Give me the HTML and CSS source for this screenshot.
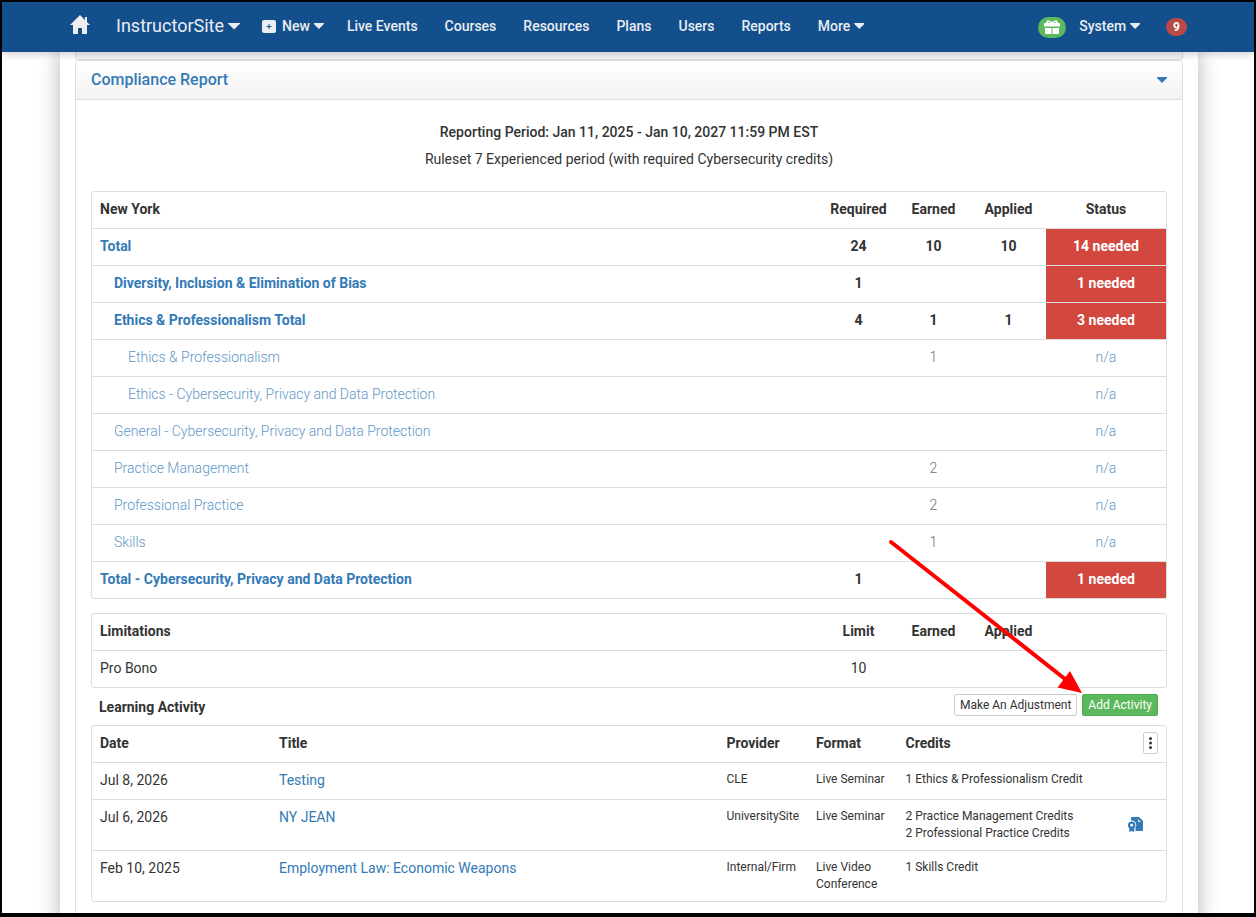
FILE: index.html
```
<!DOCTYPE html>
<html lang="en">
<head>
    <meta charset="UTF-8">
    <title>Compliance Report</title>
    <link rel="stylesheet" href="styles.css">
</head>
<body>
    <header class="navbar">
        <nav class="nav-inner">
            <a class="home" href="#" aria-label="Home">
                <svg width="20" height="19" viewBox="0 0 20 19" fill="currentColor"><path d="M10 0 0 10h3v9h5v-6h4v6h5v-9h3l-3-3V2h-2v3z"/></svg>
            </a>
            <button class="nav-item brand">InstructorSite <span class="caret"></span></button>
            <button class="nav-item new">
                <svg width="14" height="13" viewBox="0 0 14 13"><rect width="14" height="13" rx="2" fill="currentColor"/><path d="M7 4v5M4.500 6.500h5" stroke="#134f8c" stroke-width="1"/></svg>
                New <span class="caret"></span>
            </button>
            <a class="nav-item" href="#">Live Events</a>
            <a class="nav-item" href="#">Courses</a>
            <a class="nav-item" href="#">Resources</a>
            <a class="nav-item" href="#">Plans</a>
            <a class="nav-item" href="#">Users</a>
            <a class="nav-item" href="#">Reports</a>
            <button class="nav-item">More <span class="caret"></span></button>
            <div class="nav-right">
                <a class="gift" href="#" aria-label="Gifts">
                    <svg width="16" height="14" viewBox="0 0 16 14"><path d="M1 3h14q1 0 1 1v2.500H0V4q0-1 1-1zM1 8h6.500v6H2q-1 0-1-1zM8.500 8H15v5q0 1-1 1H8.500z" fill="#fff"/><path d="M8 3.500C6 3.500 3 3.500 3 2.200S6 .2 8 3.500C10 .2 13 .9 13 2.200S10 3.500 8 3.500z" fill="none" stroke="#fff" stroke-width="1.500"/></svg>
                </a>
                <button class="nav-item">System <span class="caret"></span></button>
                <a class="badge" href="#">9</a>
            </div>
        </nav>
    </header>

    <main class="container">
        <div class="panel panel-prev"></div>
        <section class="panel">
            <div class="panel-heading">
                <h2>Compliance Report</h2>
                <button class="toggle" aria-label="Collapse"><span class="caret"></span></button>
            </div>
            <div class="panel-body">
                <div class="period">
                    <p><b>Reporting Period: Jan 11, 2025 - Jan 10, 2027 11:59 PM EST</b></p>
                    <p>Ruleset 7 Experienced period (with required Cybersecurity credits)</p>
                </div>

                <div class="box">
                    <table class="credits">
                        <thead>
                            <tr><th>New York</th><th class="num">Required</th><th class="num">Earned</th><th class="num">Applied</th><th class="status">Status</th></tr>
                        </thead>
                        <tbody>
                            <tr class="strong"><td><a href="#">Total</a></td><td>24</td><td>10</td><td>10</td><td class="needed">14 needed</td></tr>
                            <tr class="strong"><td class="in1"><a href="#">Diversity, Inclusion &amp; Elimination of Bias</a></td><td>1</td><td></td><td></td><td class="needed">1 needed</td></tr>
                            <tr class="strong"><td class="in1"><a href="#">Ethics &amp; Professionalism Total</a></td><td>4</td><td>1</td><td>1</td><td class="needed">3 needed</td></tr>
                            <tr class="light"><td class="in2"><a href="#">Ethics &amp; Professionalism</a></td><td></td><td>1</td><td></td><td><a href="#">n/a</a></td></tr>
                            <tr class="light"><td class="in2"><a href="#">Ethics - Cybersecurity, Privacy and Data Protection</a></td><td></td><td></td><td></td><td><a href="#">n/a</a></td></tr>
                            <tr class="light"><td class="in1"><a href="#">General - Cybersecurity, Privacy and Data Protection</a></td><td></td><td></td><td></td><td><a href="#">n/a</a></td></tr>
                            <tr class="light"><td class="in1"><a href="#">Practice Management</a></td><td></td><td>2</td><td></td><td><a href="#">n/a</a></td></tr>
                            <tr class="light"><td class="in1"><a href="#">Professional Practice</a></td><td></td><td>2</td><td></td><td><a href="#">n/a</a></td></tr>
                            <tr class="light"><td class="in1"><a href="#">Skills</a></td><td></td><td>1</td><td></td><td><a href="#">n/a</a></td></tr>
                            <tr class="strong"><td><a href="#">Total - Cybersecurity, Privacy and Data Protection</a></td><td>1</td><td></td><td></td><td class="needed">1 needed</td></tr>
                        </tbody>
                    </table>
                </div>

                <div class="box limits">
                    <table class="credits">
                        <thead>
                            <tr><th>Limitations</th><th class="num">Limit</th><th class="num">Earned</th><th class="num">Applied</th><th class="status"></th></tr>
                        </thead>
                        <tbody>
                            <tr><td>Pro Bono</td><td>10</td><td></td><td></td><td></td></tr>
                        </tbody>
                    </table>
                </div>

                <div class="activity-bar">
                    <h3>Learning Activity</h3>
                    <button class="btn">Make An Adjustment</button>
                    <button class="btn btn-success">Add Activity</button>
                    <svg class="arrow" width="196" height="156" viewBox="0 0 196 156"><path d="M4 4 178 141" stroke="#f00" stroke-width="4" stroke-linecap="round"/><path d="M195 155 170.500 149.500 183 133z" fill="#f00"/></svg>
                </div>

                <div class="box">
                    <table class="activity">
                        <thead>
                            <tr>
                                <th class="w2">Date</th><th class="w5">Title</th><th class="w1">Provider</th><th class="w1">Format</th><th class="w2">Credits</th>
                                <th class="w1 actions">
                                    <button class="more" aria-label="Options"><svg width="3" height="12" viewBox="0 0 3 12" fill="#333"><circle cx="1.500" cy="1.500" r="1.500"/><circle cx="1.500" cy="6" r="1.500"/><circle cx="1.500" cy="10.500" r="1.500"/></svg></button>
                                </th>
                            </tr>
                        </thead>
                        <tbody>
                            <tr><td>Jul 8, 2026</td><td><a href="#">Testing</a></td><td class="small">CLE</td><td class="small">Live Seminar</td><td class="small" colspan="2">1 Ethics &amp; Professionalism Credit</td></tr>
                            <tr>
                                <td>Jul 6, 2026</td><td><a href="#">NY JEAN</a></td><td class="small">UniversitySite</td><td class="small">Live Seminar</td><td class="small">2 Practice Management Credits<br>2 Professional Practice Credits</td>
                                <td class="cert">
                                    <a href="#" aria-label="Certificate"><svg width="15" height="15" viewBox="0 0 15 15"><path d="M4 0h7l4 4v9q0 1-1 1H7.500v-3.500A4.500 4.500 0 0 0 3 3.500V1q0-1 1-1z" fill="#337ab7"/><path d="M10.500 2.500v2h2" fill="none" stroke="#fff"/><circle cx="3.700" cy="8.200" r="3.700" fill="#337ab7"/><path d="M1.300 10h4.900v5l-2.500-1-2.400 1z" fill="#337ab7"/><circle cx="3.700" cy="8.200" r="1.400" fill="#fff"/></svg></a>
                                </td>
                            </tr>
                            <tr><td>Feb 10, 2025</td><td><a href="#">Employment Law: Economic Weapons</a></td><td class="small">Internal/Firm</td><td class="small">Live Video Conference</td><td class="small" colspan="2">1 Skills Credit</td></tr>
                        </tbody>
                    </table>
                </div>
            </div>
        </section>
    </main>
</body>
</html>
```
FILE: styles.css
```
* {
    box-sizing: border-box;
}
body {
    display: flex;
    flex-direction: column;
    height: 100vh;
    margin: 0;
    overflow: hidden;
    border: 2px solid #000;
    border-bottom-width: 4px;
    background: #fff;
    color: #333;
    font-family: Roboto, sans-serif;
    font-size: 14px;
    line-height: 20px;
}
h2, h3, p {
    margin: 0;
}
a {
    color: #337ab7;
    text-decoration: none;
}
button {
    font: inherit;
    cursor: pointer;
}
svg {
    display: block;
    flex: none;
}
.caret {
    width: 10px;
    height: 6px;
    background: currentColor;
    clip-path: polygon(0 0, 100% 0, 100% 15%, 50% 100%, 0 15%);
}

/* top bar */
.navbar {
    position: relative;
    z-index: 1;
    flex: none;
    height: 50px;
    background: #134f8c;
    box-shadow: 0 2px 8px rgba(0, 0, 0, 0.2);
}
.nav-inner {
    display: flex;
    align-items: center;
    gap: 27px;
    height: 48px;
    padding: 0 67px 0 68px;
}
.nav-item {
    display: flex;
    align-items: center;
    gap: 4px;
    padding: 0;
    border: 0;
    background: none;
    color: #e9edf2;
    font-weight: 500;
    white-space: nowrap;
}
.home {
    margin: -3px -1px 0 0;
    color: #eee;
}
.brand {
    margin-right: -5px;
    font-size: 18px;
    font-weight: 400;
}
.brand .caret {
    width: 12px;
    height: 7px;
}
.new {
    margin-right: -4px;
}
.new svg {
    margin-right: 2px;
}
.nav-right {
    display: flex;
    align-items: center;
    margin-left: auto;
}
.gift {
    display: flex;
    align-items: center;
    justify-content: center;
    width: 28px;
    height: 21px;
    margin: 2px 13px 0 0;
    border-radius: 11px;
    background: #5cb85c;
}
.badge {
    margin: 2px 0 0 26px;
    padding: 0 7px;
    border-radius: 10px;
    background: #b94a48;
    color: #fff;
    font-size: 12px;
    font-weight: 700;
    line-height: 18px;
}

/* page */
.container {
    flex: 1 0 auto;
    margin: 0 56px 0 58px;
    padding: 0 15px;
    background: #fff;
    box-shadow: 0 0 20px rgba(0, 0, 0, 0.3);
}
.panel {
    min-height: 860px;
    border: 1px solid #ddd;
    border-radius: 4px;
}
.panel-prev {
    min-height: 8px;
    border-top: 0;
    border-radius: 0 0 4px 4px;
    background: #f5f5f5;
}
.panel-heading {
    display: flex;
    align-items: center;
    justify-content: space-between;
    height: 39px;
    padding: 0 15px;
    border-bottom: 1px solid #ddd;
    border-radius: 3px 3px 0 0;
    background: linear-gradient(#fff, #f3f3f3);
    color: #337ab7;
}
.panel-heading h2 {
    font-size: 16px;
    font-weight: 500;
}
.toggle {
    padding: 0;
    border: 0;
    background: none;
    color: #337ab7;
}
.toggle .caret {
    display: block;
}
.panel-body {
    padding: 22px 15px;
}
.period {
    display: flex;
    flex-direction: column;
    gap: 7px;
    margin-bottom: 22px;
    text-align: center;
}
b {
    font-weight: 500;
}
th, h3 {
    font-weight: 700;
}
.box {
    border: 1px solid #ddd;
    border-radius: 3px;
}
.limits {
    margin-top: 14px;
}

table {
    width: 100%;
    border-collapse: separate;
    border-spacing: 0;
    table-layout: fixed;
}
th, td {
    padding: 7px 8px 9px;
    text-align: left;
    vertical-align: top;
}
td {
    border-top: 1px solid #ddd;
}
.credits th + th, .credits td + td {
    text-align: center;
}
.num {
    width: 75px;
}
.status {
    width: 120px;
}
.strong {
    font-weight: 700;
}
.light {
    color: #707070;
    font-weight: 300;
}
.light a {
    color: #5f97c8;
}
.credits .in1 {
    padding-left: 22px;
}
.credits .in2 {
    padding-left: 36px;
}
.needed {
    background: #d2483f;
    background-clip: padding-box;
    color: #fff;
}

/* learning activity */
.activity-bar {
    display: flex;
    position: relative;
    align-items: center;
    gap: 5px;
    height: 37px;
    padding: 0 9px 0 8px;
}
.activity-bar h3 {
    margin-right: auto;
    font-size: 14px;
}
.btn {
    height: 22px;
    margin-bottom: 3px;
    padding: 0 5px;
    border: 1px solid #ccc;
    border-radius: 2px;
    background: #fff;
    color: #333;
    font-size: 12px;
    line-height: 18px;
}
.btn-success {
    border-color: #4cae4c;
    background: #5cb85c;
    color: #fff;
}
.arrow {
    position: absolute;
    right: 84px;
    bottom: 31px;
    pointer-events: none;
}
.w1 {
    width: 8.333%;
}
.w2 {
    width: 16.667%;
}
.w5 {
    width: 41.667%;
}
.activity .small {
    padding: 8px 0 8px 8px;
    font-size: 12px;
    line-height: 17px;
}
.activity .actions {
    padding-top: 6px;
    padding-bottom: 0;
}
.more {
    display: block;
    width: 15px;
    height: 22px;
    margin-left: auto;
    padding: 0 5px;
    border: 1px solid #ccc;
    border-radius: 2px;
    background: #fff;
}
.activity .cert {
    padding-right: 23px;
    vertical-align: middle;
}
.cert svg {
    margin-left: auto;
}
```
